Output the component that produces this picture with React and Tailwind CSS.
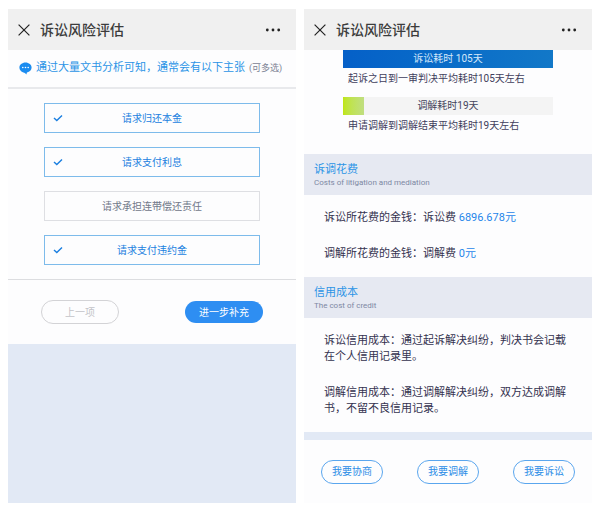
import React, { useState } from 'react';

const CLAIMS = [
    { id: 'principal', label: '请求归还本金' },
    { id: 'interest', label: '请求支付利息' },
    { id: 'joint', label: '请求承担连带偿还责任' },
    { id: 'penalty', label: '请求支付违约金' },
];

const DURATIONS = [
    {
        id: 'litigation',
        label: '诉讼耗时 105天',
        note: '起诉之日到一审判决平均耗时105天左右',
        percent: 100,
        fill: 'bg-linear-to-r from-[#0560c8] to-[#1278c8]',
        text: 'text-[#d5e8fa]',
    },
    {
        id: 'mediation',
        label: '调解耗时19天',
        note: '申请调解到调解结束平均耗时19天左右',
        percent: 10,
        fill: 'bg-linear-to-r from-[#bfe60a] to-[#c0de80]',
        text: 'text-[#45445c]',
    },
];

const ACTIONS = ['我要协商', '我要调解', '我要诉讼'];

const TitleBar = () => (
    <header className="flex h-[41px] shrink-0 items-center bg-[#f0f0f0] px-[10px]">
        <button type="button" aria-label="关闭" className="text-[#222222]">
            <svg viewBox="0 0 12 12" className="size-3" fill="none" stroke="currentColor" strokeWidth="1.2">
                <path d="M0.6 0.6 11.4 11.4M11.4 0.6 0.6 11.4" />
            </svg>
        </button>
        <h1 className="ml-[10px] flex-1 text-[14px] leading-5 font-medium text-[#3c3c3c]">诉讼风险评估</h1>
        <button type="button" aria-label="更多" className="mr-[5px] text-[#222222]">
            <svg viewBox="0 0 16 4" className="h-1 w-4" fill="currentColor">
                <circle cx="2.3" cy="2" r="1.4" />
                <circle cx="8" cy="2" r="1.4" />
                <circle cx="13.7" cy="2" r="1.4" />
            </svg>
        </button>
    </header>
);

const ClaimOption = ({ claim, checked, onToggle }) => (
    <label
        className={`grid h-[30px] cursor-pointer grid-cols-[26px_1fr_26px] items-center border text-[10px] ${
            checked ? 'border-[#7dbbeb] text-[#1b7fe0]' : 'border-[#dedfe3] text-[#72798a]'
        }`}
    >
        <span className="grid place-items-center">
            <input
                type="checkbox"
                checked={checked}
                onChange={() => onToggle(claim.id)}
                className="col-start-1 row-start-1 size-[10px] appearance-none"
            />
            {checked && (
                <svg viewBox="0 0 10 8" className="pointer-events-none col-start-1 row-start-1 h-2 w-[10px]" fill="none" stroke="currentColor" strokeWidth="1.4">
                    <path d="M1 4 3.8 6.6 9 1.4" />
                </svg>
            )}
        </span>
        <span className="text-center">{claim.label}</span>
    </label>
);

const DurationBar = ({ item }) => (
    <div>
        <div className="grid h-[18px] items-center bg-[#f4f4f4]">
            <div className={`col-start-1 row-start-1 h-full ${item.fill}`} style={{ width: `${item.percent}%` }}></div>
            <span className={`col-start-1 row-start-1 text-center text-[10px] leading-4 ${item.text}`}>{item.label}</span>
        </div>
        <p className="mt-[3px] pl-[5px] text-[10px] leading-4 text-[#3f3d5c]">{item.note}</p>
    </div>
);

const SectionTitle = ({ title, subtitle }) => (
    <div className="flex h-[41px] flex-col justify-center bg-[#e6e9f2] px-[10px]">
        <h2 className="text-[11px] leading-4 text-[#2b94e6]">{title}</h2>
        <p className="text-[8px] leading-[10px] text-[#7d88a3]">{subtitle}</p>
    </div>
);

const ClaimsScreen = () => {
    const [selected, setSelected] = useState(['principal', 'interest', 'penalty']);

    const toggle = (id) => {
        setSelected((prev) => (prev.includes(id) ? prev.filter((x) => x !== id) : [...prev, id]));
    };

    return (
        <section className="flex flex-col bg-[#e2e9f5]">
            <TitleBar />
            <div className="bg-[#fdfdfe]">
                <div className="flex h-[39px] items-center border-b-2 border-[#e8e9ec] pl-[11px]">
                    <svg viewBox="0 0 13 13" className="size-[13px]" fill="#1b8cf0">
                        <path d="M6.5 0.4C3 0.4 0.4 2.7 0.4 5.5c0 2.3 1.6 4.2 4 4.9 1.3 0.4 2.2 1 2.9 2.1 0.3-0.7 0.5-1.3 0.6-2 2.8-0.6 4.7-2.6 4.7-5C12.6 2.7 10 0.4 6.5 0.4Z" />
                        <g fill="#ffffff">
                            <circle cx="3.8" cy="5.5" r="0.8" />
                            <circle cx="6.5" cy="5.5" r="0.8" />
                            <circle cx="9.2" cy="5.5" r="0.8" />
                        </g>
                    </svg>
                    <p className="ml-1 text-[11px] whitespace-nowrap text-[#2b94e6]">通过大量文书分析可知，通常会有以下主张</p>
                    <span className="ml-1 text-[9px] whitespace-nowrap text-[#7c8294]">(可多选)</span>
                </div>

                <div className="flex flex-col gap-[14px] border-b border-[#dcdde0] px-9 py-[14px]">
                    {CLAIMS.map((claim) => (
                        <ClaimOption key={claim.id} claim={claim} checked={selected.includes(claim.id)} onToggle={toggle} />
                    ))}
                </div>

                <div className="flex h-16 items-center justify-between px-[33px]">
                    <button type="button" className="h-6 w-[78px] rounded-full border border-[#d3d3d6] text-[10px] text-[#c3c3c8]">
                        上一项
                    </button>
                    <button type="button" className="h-[22px] w-[78px] rounded-full bg-[#2e8ef2] text-[10px] text-white">
                        进一步补充
                    </button>
                </div>
            </div>
        </section>
    );
};

const ResultScreen = () => (
    <section className="flex flex-col bg-[#fdfdfe]">
        <TitleBar />
        <div className="flex flex-col gap-[10px] px-[39px] pb-5">
            {DURATIONS.map((item) => (
                <DurationBar key={item.id} item={item} />
            ))}
        </div>

        <SectionTitle title="诉调花费" subtitle="Costs of litigation and mediation" />
        <div className="flex flex-col gap-5 px-5 py-[15px] text-[11px] leading-4 text-[#34324f]">
            <p>
                诉讼所花费的金钱：诉讼费 <span className="text-[#1f86ea]">6896.678元</span>
            </p>
            <p>
                调解所花费的金钱：调解费 <span className="text-[#1f86ea]">0元</span>
            </p>
        </div>

        <SectionTitle title="信用成本" subtitle="The cost of credit" />
        <div className="flex flex-col gap-5 px-5 py-[15px] text-[11px] leading-4 text-[#34324f]">
            <p>诉讼信用成本：通过起诉解决纠纷，判决书会记载在个人信用记录里。</p>
            <p>调解信用成本：通过调解解决纠纷，双方达成调解书，不留不良信用记录。</p>
        </div>

        <div className="h-2 bg-[#e2e9f5]"></div>
        <div className="flex flex-1 items-center justify-between px-[17px]">
            {ACTIONS.map((action) => (
                <button key={action} type="button" className="h-6 w-[62px] rounded-full border border-[#5aa6ee] text-[10px] text-[#2b8ce6]">
                    {action}
                </button>
            ))}
        </div>
    </section>
);

const App = () => (
    <main
        lang="zh-CN"
        className="grid min-h-screen grid-cols-2 gap-2 bg-white px-2 py-[9px] font-[family-name:Roboto,'Noto_Sans_CJK_SC',sans-serif]"
    >
        <ClaimsScreen />
        <ResultScreen />
    </main>
);

export default App;
